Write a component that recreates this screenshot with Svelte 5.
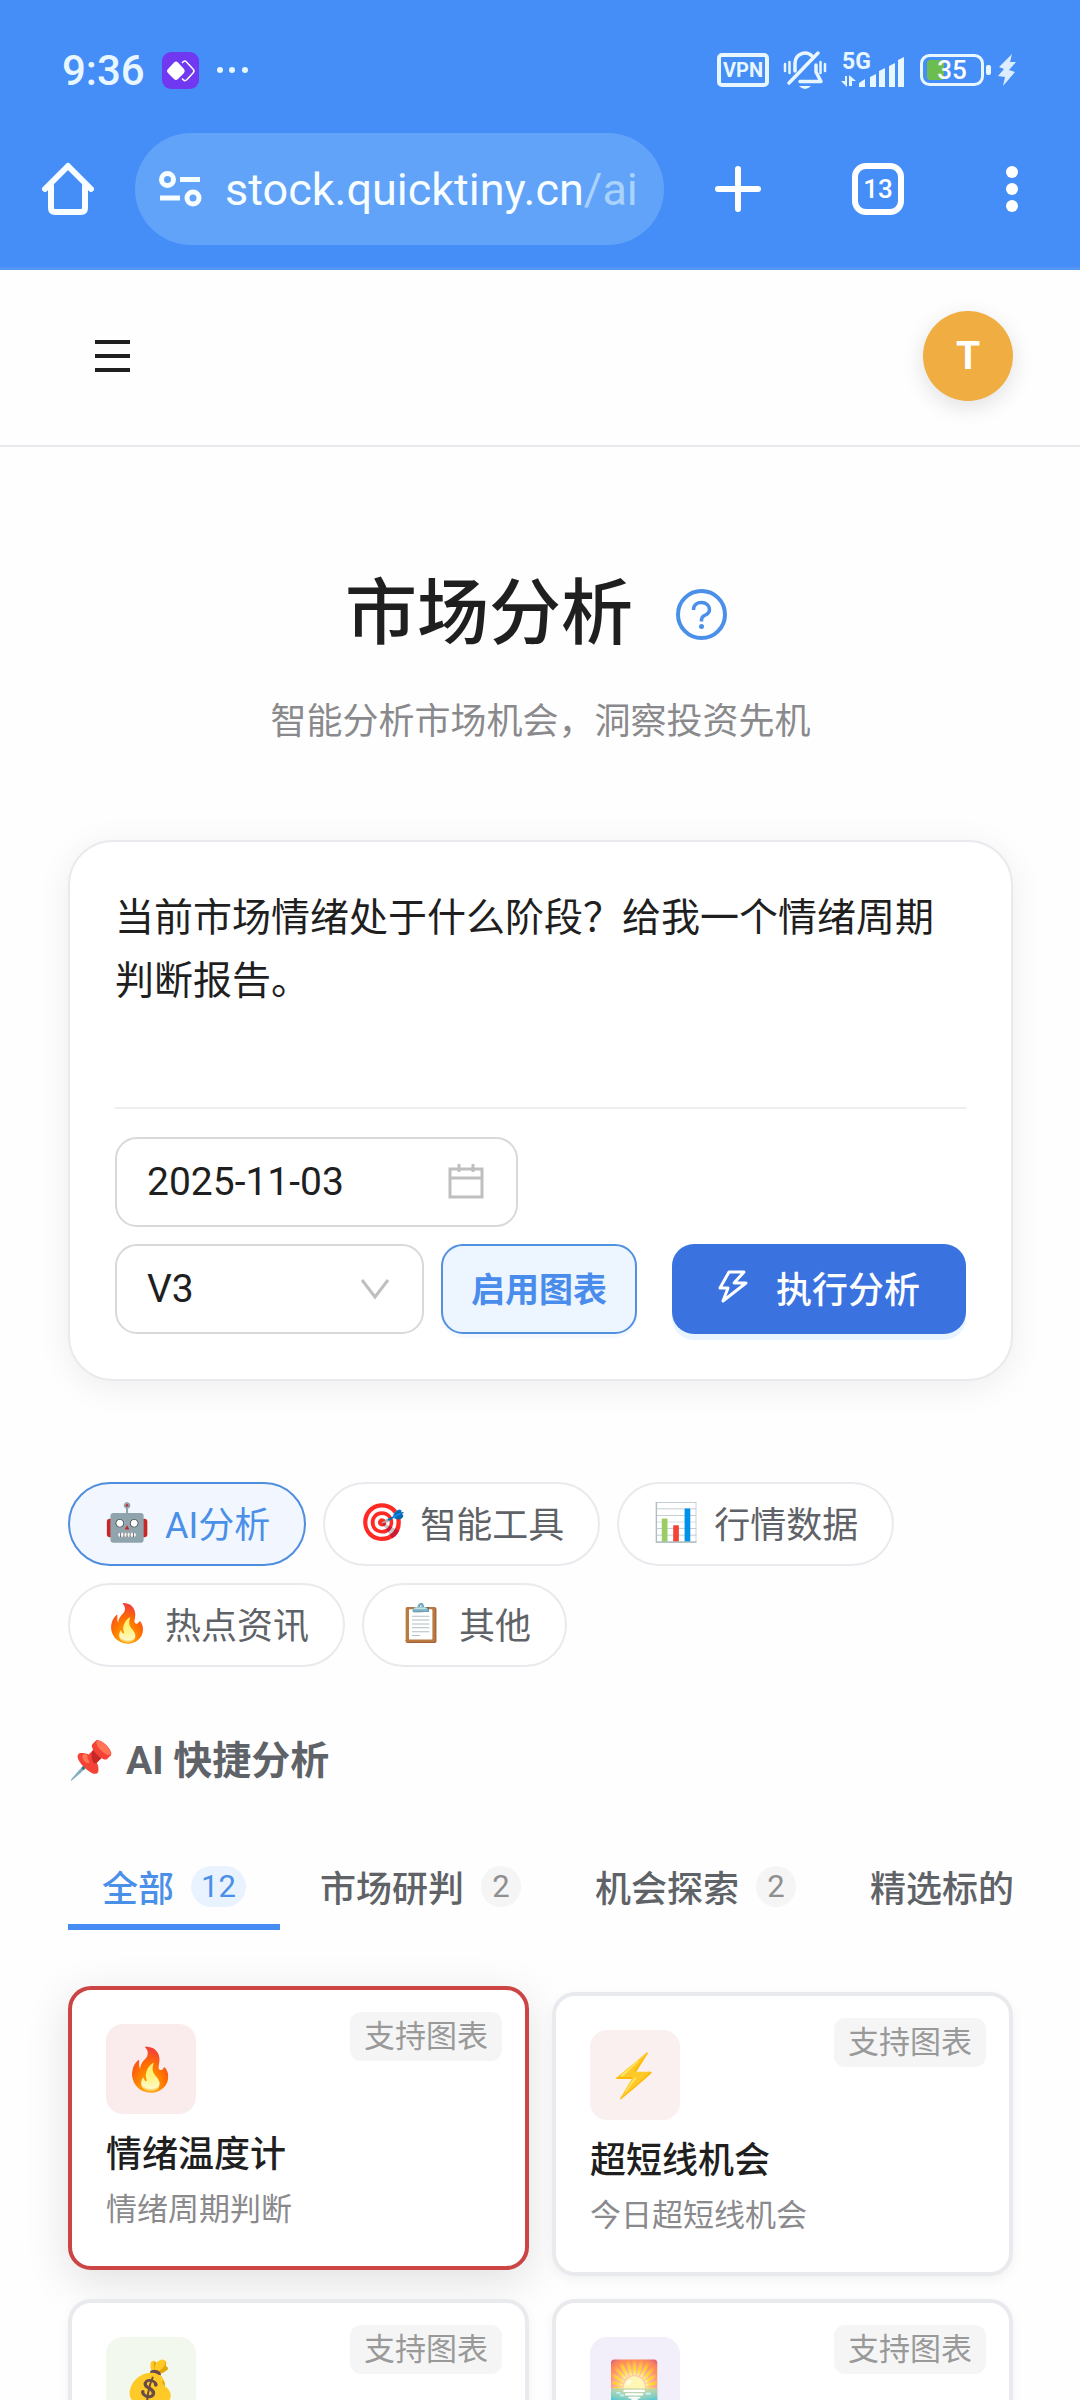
<script lang="ts">
  let prompt = $state('当前市场情绪处于什么阶段？给我一个情绪周期判断报告。');
  let date = $state('2025-11-03');
  let model = $state('V3');
  let chartsOn = $state(true);
  let activeCategory = $state('ai');
  let activeTab = $state('all');
  let activeCard = $state('mood');

  const categories = [
    { id: 'ai', icon: '🤖', label: 'AI分析' },
    { id: 'tools', icon: '🎯', label: '智能工具' },
    { id: 'market', icon: '📊', label: '行情数据' },
    { id: 'news', icon: '🔥', label: '热点资讯' },
    { id: 'other', icon: '📋', label: '其他' },
  ];

  const tabs = [
    { id: 'all', label: '全部', count: 12 },
    { id: 'research', label: '市场研判', count: 2 },
    { id: 'explore', label: '机会探索', count: 2 },
    { id: 'picks', label: '精选标的' },
  ];

  const cards = [
    { id: 'mood', icon: '🔥', tone: 'red', title: '情绪温度计', desc: '情绪周期判断' },
    { id: 'short', icon: '⚡', tone: 'rose', title: '超短线机会', desc: '今日超短线机会' },
    { id: 'money', icon: '💰', tone: 'green' },
    { id: 'dawn', icon: '🌅', tone: 'violet' },
  ];
</script>

<svelte:head><title>市场分析</title></svelte:head>

<div class="screen" lang="zh-CN">
  <div class="chrome">
    <div class="status">
      <span class="time">9:36</span>
      <svg class="app-icon" width="37" height="37" viewBox="0 0 37 37">
        <rect width="37" height="37" rx="9" fill="#7038f0" />
        <path d="M12 10.5 Q14 8.500 16 10.500 L22 17 Q23.500 19 22 21 L16 27 Q14 29 12 27 L6 21 Q4 19 6 17 Z" fill="#fff" />
        <path d="M20 11 L21.500 9.500 Q23 8.500 24.500 10 L31 17 Q33 19 31 21 L25 27.500 Q23 29.500 21.500 28 L20 26.500" fill="none" stroke="#fff" stroke-width="1.500" />
      </svg>
      <svg width="32" height="8" viewBox="0 0 32 8" fill="#e8f6ff">
        <circle cx="4" cy="4" r="3" /><circle cx="16" cy="4" r="3" /><circle cx="29" cy="4" r="3" />
      </svg>

      <div class="indicators">
        <span class="vpn">VPN</span>
        <svg width="44" height="40" viewBox="0 0 44 40" fill="none" stroke="#e8f6ff" stroke-width="3.500" stroke-linecap="round" stroke-linejoin="round">
          <path d="M12 21 V13 A10 10 0 0 1 29 6" />
          <path d="M33 15 V22 L38 31.500 H17" />
          <path d="M6 33 L35 3" />
          <path d="M16 36 H28 Q22 42 16 36 Z" fill="#e8f6ff" stroke="none" />
          <path d="M2 14 V21 M6.500 12 V23 M37.500 12 V23 M42 14 V21" stroke-width="2.500" />
        </svg>
        <svg width="65" height="40" viewBox="0 0 65 40" fill="#e8f6ff">
          <text x="1" y="19" font-size="23" font-weight="700">5G</text>
          <path d="M18 37 V33 L24 29 V37 Z M29 37 V27 L35 24 V37 Z M38 37 V21 L44 18 V37 Z M48 37 V16 L54 13 V37 Z M57 37 V10 L63 7 V37 Z" />
          <path d="M4 26 H6 V37 L0 31 H4 Z M8 25 L15 31 H11 V36 H8 Z" />
        </svg>
        <svg width="98" height="32" viewBox="0 0 98 32">
          <rect x="1.500" y="1.500" width="61" height="29" rx="8" fill="none" stroke="#e8f6ff" stroke-width="3" />
          <rect x="7" y="6" width="17" height="20" rx="3" fill="#6cbd50" />
          <rect x="66" y="11" width="5" height="10" rx="2" fill="#e8f6ff" />
          <text x="32" y="25" font-size="26" font-weight="500" text-anchor="middle" fill="#fff">35</text>
          <path d="M92 0 L79 13 L84 15 L78 22 L85 23 L83 32 L95 18 L89 16 L96 8 L90 8 Z" fill="#dcedff" />
        </svg>
      </div>
    </div>

    <nav class="browser">
      <button class="bare" aria-label="主页">
        <svg width="52" height="54" viewBox="0 0 52 54" fill="none" stroke="#f8fdff" stroke-width="6" stroke-linecap="round" stroke-linejoin="round">
          <path d="M3 27 L26 4 L49 27" />
          <path d="M9 24 V46 Q9 50 13 50 H39 Q43 50 43 46 V24" />
        </svg>
      </button>
      <div class="address">
        <svg width="42" height="38" viewBox="0 0 42 38" fill="none" stroke="#f8fdff" stroke-width="5">
          <circle cx="8.500" cy="9.500" r="6" /><path d="M21 9.500 H41" />
          <circle cx="34" cy="28" r="6" /><path d="M1 28 H21" />
        </svg>
        <span>stock.quicktiny.cn<em>/ai</em></span>
      </div>
      <button class="bare plus" aria-label="新标签页">
        <svg width="46" height="46" viewBox="0 0 46 46" stroke="#fff" stroke-width="6" stroke-linecap="round">
          <path d="M3 23 H43 M23 3 V43" />
        </svg>
      </button>
      <button class="tab-count">13</button>
      <button class="bare" aria-label="菜单">
        <svg width="12" height="48" viewBox="0 0 12 48" fill="#fff">
          <circle cx="6" cy="7" r="6" /><circle cx="6" cy="24" r="6" /><circle cx="6" cy="41" r="6" />
        </svg>
      </button>
    </nav>
  </div>

  <header class="topbar">
    <button class="bare" aria-label="打开菜单">
      <svg width="35" height="32" viewBox="0 0 35 32" stroke="#1f1f1f" stroke-width="4">
        <path d="M0 2 H35 M0 16 H35 M0 30 H35" />
      </svg>
    </button>
    <button class="avatar">T</button>
  </header>

  <main>
    <section class="hero">
      <div class="title-row">
        <h1>市场分析</h1>
        <button class="bare help" aria-label="帮助">
          <svg width="51" height="51" viewBox="0 0 51 51" fill="none" stroke="#4a8fe8">
            <circle cx="25.500" cy="25.500" r="23.500" stroke-width="4" />
            <path d="M17.500 21 C17.500 16 21 13.500 25.500 13.500 C30 13.500 33.500 16.500 33.500 20.500 C33.500 24 31 25.500 28.500 26.500 C26.500 27.500 25.500 28.500 25.500 31 V32.500" stroke-width="3.500" />
            <circle cx="25.500" cy="37.500" r="2.500" fill="#4a8fe8" stroke="none" />
          </svg>
        </button>
      </div>
      <p>智能分析市场机会，洞察投资先机</p>
    </section>

    <form class="composer" onsubmit={(e) => e.preventDefault()}>
      <textarea rows="3" aria-label="分析问题" bind:value={prompt}></textarea>
      <div class="controls">
        <div class="field date">
          <input type="text" aria-label="日期" bind:value={date} />
          <svg width="36" height="36" viewBox="0 0 36 36" fill="none" stroke="#bfbfbf" stroke-width="3">
            <path d="M2 5 H34 V33 H2 Z M2 14 H34 M11 0 V8 M25 0 V8" />
          </svg>
        </div>
        <div class="row">
          <div class="field model">
            <select aria-label="模型" bind:value={model}>
              <option value="V3">V3</option>
            </select>
            <svg width="30" height="22" viewBox="0 0 30 22" fill="none" stroke="#bfbfbf" stroke-width="3">
              <path d="M2 2 L15 19 L28 2" />
            </svg>
          </div>
          <button type="button" class="toggle" class:on={chartsOn} onclick={() => (chartsOn = !chartsOn)}>启用图表</button>
          <button type="submit" class="run">
            <svg width="30" height="34" viewBox="0 0 30 34" fill="none" stroke="#fff" stroke-width="3" stroke-linejoin="round">
              <path d="M11 2 H26 L16 13 H28 L5 31 L10 18 H2 Z" />
            </svg>
            执行分析
          </button>
        </div>
      </div>
    </form>

    <div class="chips">
      {#each categories as c}
        <button class="chip" class:active={activeCategory === c.id} onclick={() => (activeCategory = c.id)}>
          <span class="emoji">{c.icon}</span>{c.label}
        </button>
      {/each}
    </div>

    <h2><span class="emoji">📌</span>AI 快捷分析</h2>

    <div class="tabs">
      {#each tabs as t}
        <button class="tab" class:active={activeTab === t.id} onclick={() => (activeTab = t.id)}>
          {t.label}
          {#if t.count}<span class="count">{t.count}</span>{/if}
        </button>
      {/each}
    </div>

    <div class="grid">
      {#each cards as c}
        <button class="card" class:active={activeCard === c.id} onclick={() => (activeCard = c.id)}>
          <span class="tag">支持图表</span>
          <span class="tile {c.tone}">{c.icon}</span>
          {#if c.title}
            <strong>{c.title}</strong>
            <small>{c.desc}</small>
          {/if}
        </button>
      {/each}
    </div>
  </main>
</div>

<style>
  :global(body) { background: #fefefe; }
  .screen {
    height: 100vh;
    display: flex;
    flex-direction: column;
    overflow: hidden;
    color: #1f1f1f;
    font-family: Roboto, "Noto Sans CJK SC", "Noto Color Emoji", sans-serif;
  }
  .screen * { box-sizing: border-box; }
  button, input, select, textarea { font-family: inherit; color: inherit; margin: 0; }
  button { cursor: pointer; white-space: nowrap; }
  svg { display: block; flex: none; overflow: visible; }
  .bare { border: none; background: none; padding: 0; }

  .chrome { background: #458df7; color: #f8fdff; border-bottom: 3px solid #5496f2; flex: none; }
  .status { display: flex; align-items: center; height: 133px; padding: 7px 62px 0; color: #e8f6ff; }
  .time { font-size: 42px; font-weight: 500; margin-right: 17px; }
  .app-icon { margin-right: 17px; }
  .indicators { display: flex; align-items: center; margin-left: auto; gap: 14px; }
  .vpn { border: 4px solid #e8f6ff; border-radius: 5px; width: 52px; height: 34px; line-height: 27px; font-size: 20px; font-weight: 700; text-align: center; }
  .browser { display: flex; align-items: center; height: 112px; margin-bottom: 22px; padding: 0 62px 0 42px; }
  .address { flex: 1; display: flex; align-items: center; gap: 24px; height: 112px; margin: 0 51px 0 41px; padding: 0 24px; border-radius: 56px; background: #61a3f8; font-size: 45px; min-width: 0; }
  .address em { font-style: normal; color: #a9d2fd; }
  .plus { margin-right: 91px; }
  .tab-count { width: 52px; height: 52px; margin-right: 102px; padding: 0; border: 6px solid #fff; border-radius: 14px; background: none; color: #fff; font-size: 26px; font-weight: 500; line-height: 40px; }

  .topbar { display: flex; align-items: center; justify-content: space-between; flex: none; height: 177px; padding: 0 67px 3px 95px; border-bottom: 2px solid #e8eaed; }
  .avatar { width: 90px; height: 90px; border: none; border-radius: 50%; background: #f0ad41; color: #fff; font-size: 39px; font-weight: 700; box-shadow: 0 6px 22px rgba(0, 0, 0, 0.12); }

  main { flex: 1; min-height: 0; overflow: hidden; padding: 124px 67px 0 68px; }
  .hero { text-align: center; }
  .title-row { display: flex; align-items: center; justify-content: center; gap: 34px; }
  h1 { margin: 0; font-size: 72px; line-height: 86px; font-weight: 500; }
  .help { padding: 9px; }
  .hero p { margin: 37px 0 0; font-size: 36px; line-height: 56px; color: #8a8a8d; }

  .composer { margin-top: 90px; padding: 45px; border: 2px solid #e8eaed; border-radius: 45px; background: #fff; box-shadow: 0 6px 34px rgba(0, 0, 0, 0.07); }
  textarea { display: block; width: 100%; border: none; padding: 0; outline: none; resize: none; overflow: hidden; background: none; font-size: 39px; line-height: 63px; }
  .controls { margin-top: 31px; padding-top: 28px; border-top: 2px solid #eeeeee; display: grid; gap: 17px; }
  .row { display: flex; gap: 17px; }
  .field { position: relative; height: 90px; }
  .field input, .field select { width: 100%; height: 100%; border: 2px solid #d9d9d9; border-radius: 22px; padding: 0 30px; background: #fff; font-size: 39px; appearance: none; }
  .field svg { position: absolute; right: 34px; top: 0; bottom: 0; margin: auto; pointer-events: none; }
  .date { width: 403px; }
  .model { width: 309px; }
  .toggle, .run { height: 90px; border-radius: 22px; }
  .toggle { padding: 0 28px 4px; border: 2px solid #d9d9d9; background: #fff; font-size: 34px; font-weight: 700; }
  .toggle.on { border-color: #5290e0; background: #edf5ff; color: #4a8cec; box-shadow: 0 4px 0 #f6faff; }
  .run { display: flex; align-items: center; gap: 28px; margin-left: auto; padding: 0 46px 4px; border: none; background: #3a72e0; color: #fff; font-size: 36px; font-weight: 500; box-shadow: 0 6px 0 #e8f4ff; }

  .chips { display: flex; flex-wrap: wrap; gap: 17px; margin-top: 101px; }
  .chip { display: flex; align-items: center; height: 84px; padding: 0 34px 4px; border: 2px solid #e8eaed; border-radius: 42px; background: #fff; color: #5f6368; font-size: 36px; }
  .chip.active { border-color: #4f8ede; background: #f2f7ff; color: #4a8fe8; }
  .emoji { width: 46px; margin-right: 15px; font-size: 37px; }
  h2 { display: flex; align-items: center; margin: 63px 0 0; font-size: 39px; line-height: 62px; font-weight: 700; color: #5f6368; }
  h2 .emoji { margin-right: 12px; }

  .tabs { display: flex; gap: 6px; margin-top: 56px; overflow: hidden; }
  .tab { display: flex; align-items: center; gap: 17px; flex: none; height: 82px; padding: 0 34px; border: none; border-bottom: 6px solid transparent; background: none; color: #5f6368; font-size: 36px; font-weight: 500; }
  .tab.active { border-color: #478cf2; color: #4a8fe8; }
  .count { min-width: 40px; height: 41px; padding: 0 10px; border-radius: 21px; background: #f5f5f5; color: #8f8f8f; font-size: 31px; line-height: 41px; font-weight: 400; text-align: center; }
  .tab.active .count { background: #e8f3ff; color: #4a8fe8; }

  .grid { display: grid; grid-template-columns: 1fr 1fr; gap: 23px; margin-top: 62px; }
  .card { position: relative; display: flex; flex-direction: column; align-items: flex-start; padding: 34px; border: 4px solid #e8eaed; border-radius: 23px; background: #fff; text-align: left; box-shadow: 0 4px 12px rgba(0, 0, 0, 0.05); }
  .card.active { border-color: #cc4545; transform: translateY(-6px); box-shadow: 0 11px 45px rgba(0, 0, 0, 0.12); }
  .tile { display: flex; align-items: center; justify-content: center; width: 90px; height: 90px; border-radius: 17px; font-size: 42px; }
  .tile.red { background: #faecec; }
  .tile.rose { background: #faf0ef; }
  .tile.green { background: #f3f8ee; }
  .tile.violet { background: #f2eefa; }
  .card strong { margin-top: 13px; font-size: 36px; line-height: 56px; font-weight: 500; }
  .card small { margin-top: 5px; font-size: 31px; line-height: 44px; color: #8a8a8d; }
  .tag { position: absolute; top: 22px; right: 23px; padding: 0 14px; border-radius: 11px; background: #f5f5f5; color: #999; font-size: 31px; line-height: 49px; }
</style>
